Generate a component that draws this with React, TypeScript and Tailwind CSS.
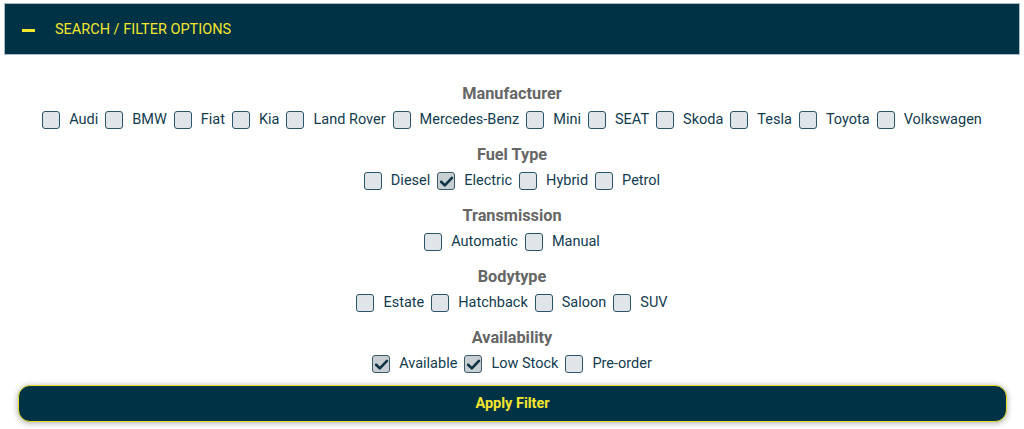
import React, { useState } from "react";

const groups: { title: string; options: string[] }[] = [
  {
    title: "Manufacturer",
    options: [
      "Audi",
      "BMW",
      "Fiat",
      "Kia",
      "Land Rover",
      "Mercedes-Benz",
      "Mini",
      "SEAT",
      "Skoda",
      "Tesla",
      "Toyota",
      "Volkswagen",
    ],
  },
  { title: "Fuel Type", options: ["Diesel", "Electric", "Hybrid", "Petrol"] },
  { title: "Transmission", options: ["Automatic", "Manual"] },
  { title: "Bodytype", options: ["Estate", "Hatchback", "Saloon", "SUV"] },
  { title: "Availability", options: ["Available", "Low Stock", "Pre-order"] },
];

const Check: React.FC<{ label: string; checked: boolean; onToggle: () => void }> = ({
  label,
  checked,
  onToggle,
}) => (
  <label className="flex items-center gap-[9px] cursor-pointer" onClick={onToggle}>
    <span
      className={
        checked
          ? "flex h-[18px] w-[18px] items-center justify-center rounded-[3px] border-[1.5px] border-[#3b5b69] bg-[#c7cfd3]"
          : "flex h-[18px] w-[18px] items-center justify-center rounded-[3px] border-[1.5px] border-[#2b5566] bg-[#dfe5e8]"
      }
    >
      {checked && (
        <svg viewBox="0 0 16 16" className="h-[15px] w-[15px]">
          <path
            d="M2.3 8.3 L6.2 12.2 L13.8 4.2"
            fill="none"
            stroke="#0e3446"
            strokeWidth="2.8"
            strokeLinecap="round"
            strokeLinejoin="round"
          />
        </svg>
      )}
    </span>
    <span className="text-[14.5px] leading-[20px] text-[#123c4e]">{label}</span>
  </label>
);

export default function App() {
  const [checked, setChecked] = useState<Record<string, boolean>>({
    Electric: true,
    Available: true,
    "Low Stock": true,
  });
  const toggle = (k: string) => setChecked((c) => ({ ...c, [k]: !c[k] }));

  return (
    <div className="min-h-[429px] bg-white px-[4px] pt-[3px] font-['Roboto',sans-serif]">
      <div className="flex h-[52px] items-center border border-[#a7bcc5] bg-[#003246] pt-[2px]">
        <span className="ml-[17px] h-[3px] w-[13px] bg-[#f2e62e]" />
        <span className="ml-[20px] text-[14.5px] text-[#f2e62e]">SEARCH / FILTER OPTIONS</span>
      </div>
      <div className="flex flex-col items-center pt-[29px]">
        {groups.map((g) => (
          <div key={g.title} className="mb-[15px] flex flex-col items-center last:mb-0">
            <div className="text-[16.3px] font-bold leading-[20px] text-[#666666]">{g.title}</div>
            <div className="mt-[6px] flex h-[20px] items-center gap-[7px]">
              {g.options.map((o) => (
                <Check key={o} label={o} checked={!!checked[o]} onToggle={() => toggle(o)} />
              ))}
            </div>
          </div>
        ))}
      </div>
      <div className="ml-[14px] mr-[13px] mt-[11px]">
        <button className="flex h-[37px] w-full items-center justify-center rounded-[12px] border border-[#e8dc2a] bg-[#003246] text-[14.5px] font-bold text-[#f2e62e] shadow-[0_1px_6px_rgba(0,0,0,0.35)]">
          Apply Filter
        </button>
      </div>
    </div>
  );
}
